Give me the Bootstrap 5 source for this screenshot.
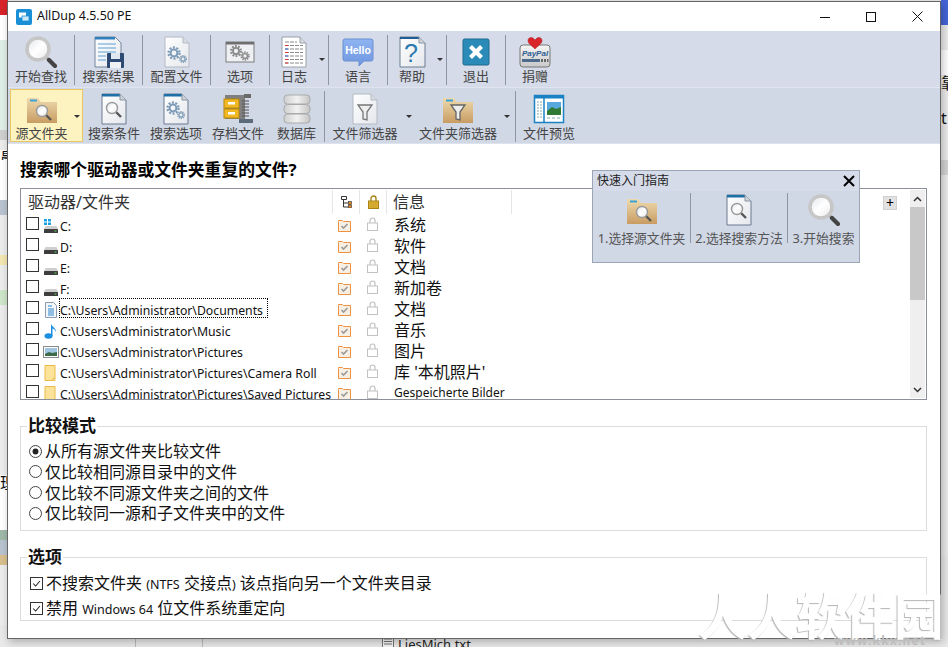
<!DOCTYPE html>
<html lang="zh-CN">
<head>
<meta charset="UTF-8">
<title>AllDup 4.5.50 PE</title>
<link href="https://cdn.jsdelivr.net/npm/bootstrap@5.3.0/dist/css/bootstrap.min.css" rel="stylesheet">
<style>
html,body{height:647px;overflow:hidden}
body{background:#e9e9e9;font-family:"Noto Sans","Noto Sans CJK SC",sans-serif;color:#111;position:relative;width:948px}
.defs{position:absolute;width:0;height:0}
.strip{position:absolute;top:0;height:647px;overflow:hidden;width:8px;left:0}
.strip.r{left:941px;width:7px}
.strip>div{width:100%;flex:none;overflow:hidden;font-size:16px;line-height:16px}
.h10{height:10px}.h15{height:15px}.h25{height:25px}.h40{height:40px}.h60{height:60px}.h90{height:90px}
.b-red{background:#d8232a}.b-white{background:#fff}.b-green{background:#dfeee6}.b-grey{background:#cfcfcf}.b-lt{background:#ececec}
.b-yel{background:#f4e6b0}.b-blue{background:#4565d8}.b-dk{background:#d4d4d4}.b-mix{background:#9fb8a8}.b-tan{background:#d8c08c}
.b-sl{background:#b9c3cf}.b-lg{background:#cde5c8}
.win{position:absolute;left:7px;top:1px;width:934px;height:638px;background:#fff;border:1px solid #666;box-shadow:2px 3px 8px rgba(0,0,0,.25)}
.tb-title{height:29px;font-size:12.4px}
.tb-title .app{margin-left:8px;margin-right:5px}
.wb{width:46px;height:29px}
.tb{background:#d5dbe8;height:57px;border-bottom:1px solid #dfe4ee}
.tb.two{background:#d0d7e5;height:56px;border-bottom:1px solid #dde2ec}
.it{flex:none;padding-top:5px;font-size:13px;line-height:16px;color:#444;text-align:center;position:relative;white-space:nowrap}
.it svg{display:block;margin:0 auto}
.it.cr{padding-right:10px}
.cr i{position:absolute;right:3px;top:27px;border:3px solid transparent;border-top:3px solid #333;border-bottom:0}
.sep{flex:none;width:1px;background:#8f96a3;margin:4px 0 2px}
.two .sep{margin:3px 0 1px}
.w66{width:66px}.w67{width:67px}.w58{width:58px}
.active{width:73px;margin:1px 0 1px 2px;padding-top:3px;background:#fdf3c0;border:1px solid #e9c766}
.w62{width:62px}.w55{width:55px}.w90{width:90px}.w100{width:100px}.w66b{width:66px}
.it.w100{padding-right:14px}
.it.w100 i{right:5px}
.active i{right:2px;top:25px}
.head{font-size:16.8px;font-weight:700;line-height:24px;margin:14px 0 0 12px;color:#000}
.panel{margin:6px 13px 0 12px;height:212px;border:1px solid #8a8f99;background:#fff}
.list{overflow:hidden;min-width:0}
.lh{height:25px;flex:none;font-size:16px;line-height:24px;color:#333}
.lh>div{flex:none;border-right:1px solid #e6e6e6;height:24px;margin-top:1px}
.c1{width:312px;padding-left:7px}
.c2{width:27px}.c3{width:27px}.c4{width:125px;padding-left:6px}
.plus{width:14px;height:14px;background:#e2e2e2;border:1px solid #d0d0d0;margin:7px 0 0 371px;font-size:14px;line-height:11px;text-align:center;color:#000}
.lr{height:21px;flex:none;align-items:center;white-space:nowrap}
.lr .form-check-input{margin:-3px 4px 0 5px}
.ic{flex:none;margin-top:2px}
.path{width:274px;font-size:12.25px;margin-right:5px;align-self:flex-start}
.path span{display:inline-block;height:20px;line-height:25px;padding:0 5px 0 1px}
.focus{outline:1px dotted #000;outline-offset:-1px}
.ock{margin:1px 16px 0 0}.lk{margin:-1px 16px 0 0}
.info{font-size:16px;line-height:20px}
.info.sm{font-size:12px}
.form-check-input{width:13px;height:13px;flex:none;border:1px solid #333;background-color:#fff;box-shadow:none}
.form-check-input[type=checkbox]{border-radius:0}
.form-check-input:checked{background-color:#fff;border-color:#333;background-image:url("data:image/svg+xml,%3csvg xmlns='http://www.w3.org/2000/svg' viewBox='0 0 13 13'%3e%3cpath fill='none' stroke='%23222' stroke-width='1.2' d='M2.5 6.5l3 3 5-6'/%3e%3c/svg%3e")}
.form-check-input[type=radio]{border-radius:50%;border-color:#444}
.form-check-input[type=radio]:checked{background-image:url("data:image/svg+xml,%3csvg xmlns='http://www.w3.org/2000/svg' viewBox='0 0 13 13'%3e%3ccircle cx='6.5' cy='6.5' r='3.5' fill='%23222'/%3e%3c/svg%3e")}
.scroll{width:15px;flex:none;background:#efefef;margin:1px 1px 1px auto}
.scroll .btn-a{height:17px}
.scroll .thumb{height:93px;background:#c8c8c8}
fieldset.gb{margin:0 13px 0 12px;border:1px solid #dcdcdc;border-radius:0;padding:0 8px 0 8px}
fieldset.gb legend{float:none;width:auto;font-size:17px;font-weight:700;line-height:20px;margin:0 0 0 -2px;padding:0 1px;color:#111}
.f1{margin-top:16px!important;height:115px}
.f2{margin-top:16px!important;height:74px}
.opt{font-size:16px;line-height:20px;height:20.67px;align-items:center;white-space:nowrap}
.opt .form-check-input{margin:0 3px 0 0}
.f1 .opts{padding-top:5px}
.f2 .opts{padding-top:4px}
.f2 .opt{height:25px}
.f2 .opt .form-check-input{margin:0 3px 0 1px}
.lat{font-size:12.5px}
.guide{position:absolute;left:584px;top:168px;width:268px;height:93px;background:#d0d7e5;border:1px solid #9aa5b5}
.gh{height:20px;background:#d5dbe8;font-size:12px;line-height:22px;padding:0 4px;color:#222}
.gc{flex:none;text-align:center;font-size:12.8px;line-height:16px;color:#555;white-space:nowrap}
.gc svg{display:block;margin:3px auto 4px}
.g1{width:97px}.g2{width:96px}.g3{width:71px}
.gsep{flex:none;width:1px;background:#8f96a3;margin:2px 0 3px}
.wm{position:absolute;left:698px;top:593px;font:700 50px/40px "Noto Sans CJK SC",sans-serif;color:#fff;text-shadow:-1px 1px 1px #b5b5b5;letter-spacing:-1px;white-space:nowrap;pointer-events:none}
.wm2{position:absolute;left:834px;top:636px;font:700 12px/10px "Noto Sans",sans-serif;letter-spacing:1.2px;color:#bdbdbd}
.under{position:absolute;top:639px;left:135px;height:8px;width:68px;border:solid #bbb;border-width:0 1px}
.under2{position:absolute;top:636px;left:382px;font-size:13px;line-height:16px;color:#222}
</style>
</head>
<body>
<svg class="defs" aria-hidden="true">
<defs>
<linearGradient id="gGlass" x1="0" y1="0" x2="1" y2="1"><stop offset="0" stop-color="#dfe3e8"/><stop offset=".5" stop-color="#fff"/><stop offset="1" stop-color="#e7e7e7"/></linearGradient>
<linearGradient id="gFolder" x1="0" y1="0" x2="0" y2="1"><stop offset="0" stop-color="#eedaae"/><stop offset="1" stop-color="#c89c62"/></linearGradient>
<linearGradient id="gDoc" x1="0" y1="0" x2="1" y2="1"><stop offset="0" stop-color="#fff"/><stop offset="1" stop-color="#e4e7ec"/></linearGradient>
<linearGradient id="gDb" x1="0" y1="0" x2="1" y2="0"><stop offset="0" stop-color="#cfcfcf"/><stop offset=".5" stop-color="#f2f2f2"/><stop offset="1" stop-color="#c4c4c4"/></linearGradient>
<linearGradient id="gPay" x1="0" y1="0" x2="0" y2="1"><stop offset="0" stop-color="#f6f6f6"/><stop offset="1" stop-color="#c9c9c9"/></linearGradient>
<linearGradient id="gHello" x1="0" y1="0" x2="0" y2="1"><stop offset="0" stop-color="#8fb4f2"/><stop offset="1" stop-color="#6f97e0"/></linearGradient>
<g id="gear"><circle r="5.5" fill="none" stroke="#7e9cb8" stroke-width="2.4" stroke-dasharray="2 1.45"/><circle r="3.4" fill="none" stroke="#7e9cb8" stroke-width="2"/></g>
<g id="gearD"><circle r="5.5" fill="none" stroke="#8a8a8a" stroke-width="2.4" stroke-dasharray="2 1.45"/><circle r="3.4" fill="none" stroke="#8a8a8a" stroke-width="2"/></g>
<g id="minimag"><line x1="4" y1="4" x2="9" y2="9" stroke="#555" stroke-width="2.4"/><circle r="5.5" fill="url(#gGlass)" stroke="#9a9a9a" stroke-width="1.4"/></g>
<g id="drv"><path d="M2.5 8h11L15 11H1z" fill="#cfcfcf"/><rect x="1" y="11" width="14" height="4" rx=".6" fill="#3d3d3d"/><rect x="11.5" y="12.5" width="2" height="1" fill="#5fd35f"/></g>
<symbol id="s-mag" viewBox="0 0 32 32"><line x1="20" y1="20" x2="24" y2="24" stroke="#aaa" stroke-width="3"/><line x1="24" y1="24" x2="30" y2="30" stroke="#444" stroke-width="4.2" stroke-linecap="round"/><circle cx="13" cy="13" r="11.5" fill="url(#gGlass)" stroke="#c6c6c6" stroke-width="2.6"/><circle cx="13" cy="13" r="9.8" fill="none" stroke="#a0a0a0" stroke-width=".6"/></symbol>
<symbol id="s-docsave" viewBox="0 0 32 32"><path d="M2 1h20l6 6v24H2z" fill="url(#gDoc)" stroke="#75869c"/><rect x="2" y="1" width="20" height="2.5" fill="#2f7fbd"/><path d="M5 8h18M5 12h18M5 16h18M5 20h8M5 24h8" stroke="#5aa0d4" stroke-width="1.2"/><rect x="14" y="17" width="17" height="15" rx="1" fill="#2d4a72"/><rect x="18" y="17" width="9" height="6" fill="#dfe6ef"/><rect x="17" y="26" width="11" height="6" fill="#eef1f5"/></symbol>
<symbol id="s-docgear" viewBox="0 0 32 32"><path d="M4 1h18l6 6v24H4z" fill="url(#gDoc)" stroke="#b4bac4"/><path d="M22 1v6h6" fill="#d8dce2" stroke="#b4bac4"/><use href="#gear" transform="translate(13 17)"/><use href="#gear" transform="translate(22 23) scale(.6)"/></symbol>
<symbol id="s-opts" viewBox="0 0 32 32"><rect x="2" y="6" width="28" height="20" fill="#eef0f3" stroke="#7d7d7d"/><rect x="2" y="6" width="28" height="2.5" fill="#6e6e6e"/><use href="#gearD" transform="translate(12 15) scale(.9)"/><use href="#gearD" transform="translate(21 20) scale(.7)"/></symbol>
<symbol id="s-log" viewBox="0 0 32 32"><path d="M4 1h18l6 6v24H4z" fill="#fff" stroke="#9aa0aa"/><path d="M22 1v6h6" fill="#d8dce2" stroke="#9aa0aa"/><path d="M7 6h12M7 9.500h18M7 13h18M7 16.500h18M7 20h18M7 23.500h18M7 27h18" stroke="#8a8a8a" stroke-dasharray="4 1"/><path d="M7 9.500h3M7 16.500h3M7 23.500h3M7 27h3" stroke="#d33"/><path d="M7 13h3M7 20h3" stroke="#36c"/></symbol>
<symbol id="s-hello" viewBox="0 0 32 32"><path d="M3 3h26a2 2 0 0 1 2 2v18a2 2 0 0 1-2 2H22l-5 5v-5H3a2 2 0 0 1-2-2V5a2 2 0 0 1 2-2z" fill="url(#gHello)" stroke="#6a8fd0"/><text x="16" y="18" text-anchor="middle" font-family="Liberation Sans,sans-serif" font-size="10.500" font-weight="700" fill="#fff">Hello</text></symbol>
<symbol id="s-help" viewBox="0 0 32 32"><path d="M4 1h19l6 6v24H4z" fill="url(#gDoc)" stroke="#6d7d92"/><rect x="4" y="1" width="19" height="2" fill="#1f5d94"/><path d="M23 1v6h6" fill="#cfd4db" stroke="#8a95a3"/><text x="15" y="26" text-anchor="middle" font-family="Liberation Sans,sans-serif" font-size="25" fill="#2c7ab0">?</text></symbol>
<symbol id="s-exit" viewBox="0 0 32 32"><rect x="3" y="3" width="26" height="26" rx="1.500" fill="#2a8ab8" stroke="#1c6a8e"/><path d="M10.500 10.500l11 11M21.500 10.500l-11 11" stroke="#fff" stroke-width="4.200"/></symbol>
<symbol id="s-pay" viewBox="0 0 32 32"><rect x="1" y="9" width="30" height="22" rx="3" fill="url(#gPay)" stroke="#777"/><text x="16" y="20" text-anchor="middle" font-family="Liberation Sans,sans-serif" font-size="8" font-weight="700" font-style="italic" fill="#2e5d92">PayPal</text><rect x="3" y="23" width="18" height="3" fill="#4e6a8c"/><path d="M22 23h2v3h-2zM25 23h2v3h-2zM28 23h1.500v3H28z" fill="#666"/><path d="M16 13C12 9 9 7.500 9 4.500 9 2 12 .5 14 2l2 2 2-2c2-1.500 5 0 5 2.500 0 3-3 4.500-7 8.500z" fill="#d9242b" stroke="#a51a1f" stroke-width=".5"/></symbol>
<symbol id="s-fsearch" viewBox="0 0 32 32"><path d="M1 5h11l3 4h16v21H1z" fill="url(#gFolder)"/><rect x="4" y="6.500" width="7" height="2" fill="#3aa3d6"/><g transform="translate(16 18)"><use href="#minimag"/></g></symbol>
<symbol id="s-dsearch" viewBox="0 0 32 32"><path d="M4 1h18l6 6v24H4z" fill="url(#gDoc)" stroke="#6a7b90"/><rect x="4" y="1" width="18" height="2.500" fill="#1d6fa8"/><path d="M22 1v6h6" fill="#cfd4db" stroke="#8a95a3"/><g transform="translate(14 15)"><use href="#minimag"/></g></symbol>
<symbol id="s-dgear" viewBox="0 0 32 32"><path d="M4 1h18l6 6v24H4z" fill="url(#gDoc)" stroke="#6a7b90"/><rect x="4" y="1" width="18" height="2.500" fill="#1d6fa8"/><path d="M22 1v6h6" fill="#cfd4db" stroke="#8a95a3"/><use href="#gear" transform="translate(13 15)"/><use href="#gear" transform="translate(21 22) scale(.6)"/></symbol>
<symbol id="s-cab" viewBox="0 0 32 32"><rect x="3" y="2" width="20" height="24" fill="#7f7f7f"/><rect x="2" y="6" width="15" height="9" fill="#f2b824" stroke="#b88708"/><rect x="2" y="16" width="15" height="9" fill="#f2b824" stroke="#b88708"/><rect x="6" y="9" width="7" height="2.500" fill="#fff"/><rect x="6" y="19" width="7" height="2.500" fill="#fff"/><path d="M20 8h7M20 11h7M20 14h7M20 17h7M20 20h7M20 23h7" stroke="#555" stroke-width="1.200"/><rect x="17" y="26" width="14" height="4" fill="#5c6a7a"/><path d="M22 1h7v4h-7z" fill="#6a6a6a"/></symbol>
<symbol id="s-db" viewBox="0 0 32 32"><rect x="3" y="2" width="26" height="9" rx="3.500" fill="url(#gDb)" stroke="#aaa"/><rect x="3" y="11.500" width="26" height="9" rx="3.500" fill="url(#gDb)" stroke="#aaa"/><rect x="3" y="21" width="26" height="9" rx="3.500" fill="url(#gDb)" stroke="#aaa"/></symbol>
<symbol id="s-dfilt" viewBox="0 0 32 32"><path d="M4 1h18l6 6v24H4z" fill="url(#gDoc)" stroke="#b4bac4"/><path d="M22 1v6h6" fill="#d8dce2" stroke="#b4bac4"/><path d="M9 12h14l-5 7v8l-4-1v-7z" fill="#eee" stroke="#777" stroke-width="1.300"/></symbol>
<symbol id="s-ffilt" viewBox="0 0 32 32"><path d="M1 5h11l3 4h16v21H1z" fill="url(#gFolder)"/><rect x="4" y="6.500" width="7" height="2" fill="#3aa3d6"/><path d="M9 12h14l-5 7v8l-4-1v-7z" fill="#eee" stroke="#666" stroke-width="1.300"/></symbol>
<symbol id="s-prev" viewBox="0 0 32 32"><rect x="1.500" y="2.500" width="29" height="27" fill="#fff" stroke="#1a82c4" stroke-width="1.500"/><rect x="1.500" y="2.500" width="29" height="3" fill="#1a82c4"/><path d="M11 5v24" stroke="#1a82c4" stroke-width="1.500"/><path d="M4 9h5M4 12h5M4 15h5M4 18h5M4 21h5M4 24h5" stroke="#8aa" stroke-dasharray="2 1"/><rect x="14" y="9" width="14" height="13" fill="#57a8dc"/><path d="M14 18l5-4 4 2 5-2v8H14z" fill="#2f7a35"/><path d="M14 25h14" stroke="#8aa" stroke-dasharray="3 2"/></symbol>
<symbol id="s-dwin" viewBox="0 0 16 16"><path d="M1 1h3v2.500H1zM5 1h3v2.500H5zM1 4.500h3V7H1zM5 4.500h3V7H5z" fill="#1ba1e2"/><use href="#drv"/></symbol>
<symbol id="s-drive" viewBox="0 0 16 16"><use href="#drv"/></symbol>
<symbol id="s-sdoc" viewBox="0 0 16 16"><path d="M2.500 .5h8l3 3v12h-11z" fill="#f4f6f8" stroke="#8a9bb0"/><path d="M5 4h4M5 7h6M5 9h6M5 11h6M5 13h6" stroke="#2a86d0"/></symbol>
<symbol id="s-music" viewBox="0 0 16 16"><ellipse cx="5.500" cy="13" rx="4" ry="2.800" fill="#1a8fe3"/><path d="M8 13V.5c.5 3.500 5.500 4 5 9-.5-2.500-2-3.500-3.500-4V13z" fill="#1a8fe3"/></symbol>
<symbol id="s-pic" viewBox="0 0 16 16"><rect x=".5" y="2.500" width="15" height="11" fill="#fff" stroke="#8a8a8a"/><rect x="2" y="4" width="12" height="8" fill="#9fc5e0"/><path d="M2 10l4-2 3 1 5-1v4H2z" fill="#3d6b4a"/></symbol>
<symbol id="s-yf" viewBox="0 0 16 16"><path d="M2 .5h10v13h-2v2H2z" fill="#fde39a" stroke="#e9bb45"/><path d="M12 13.500v2h-2" fill="none" stroke="#e9bb45"/></symbol>
<symbol id="s-of" viewBox="0 0 13 13"><path d="M.5 2.500v-1h4l1 1h7v10H.5z" fill="#f8efe4" stroke="#f0913f"/><path d="M3.500 7l2 2 4-4" fill="none" stroke="#9a9a9a" stroke-width="1.600"/></symbol>
<symbol id="s-lk" viewBox="0 0 11 14"><path d="M3 6V3.500a2.500 2.500 0 0 1 5 0V6" fill="none" stroke="#c2c2c2" stroke-width="1.200"/><rect x=".5" y="6" width="10" height="7.500" fill="#fff" stroke="#c2c2c2"/></symbol>
<symbol id="s-glk" viewBox="0 0 11 14"><path d="M3 6V3.500a2.500 2.500 0 0 1 5 0V6" fill="none" stroke="#a88414" stroke-width="1.400"/><rect x=".5" y="6" width="10" height="7.500" fill="#e0b83c" stroke="#a88414"/><path d="M1.500 8h8M1.500 10h8M1.500 12h8" stroke="#c89c20"/></symbol>
<symbol id="s-tree" viewBox="0 0 11 12"><path d="M.5 .5h5v3h-5zM2.500 3.500V11h5M2.500 7h5" fill="none" stroke="#333"/><rect x="7.500" y="5.500" width="3" height="3" fill="#e08a2e" stroke="#333" stroke-width=".6"/><rect x="7.500" y="9" width="3" height="3" fill="#e08a2e" stroke="#333" stroke-width=".6"/></symbol>
</defs>
</svg>

<div class="strip d-flex flex-column">
  <div class="b-red h15"></div><div class="b-white h25"></div><div class="b-green h90"></div><div class="b-grey h10"></div>
  <div class="b-lt h10"></div><div class="b-white h10">晨</div><div class="b-white h40"></div><div class="b-sl h15"></div><div class="b-lt h40"></div>
  <div class="b-yel h10"></div><div class="b-lt h25"></div><div class="b-lg h15"></div><div class="b-lt h60"></div>
  <div class="b-lt h60"></div><div class="b-lt h40"></div><div class="b-lt h10"></div><div class="b-white h15">理</div><div class="b-white h40"></div><div class="b-mix h10"></div>
  <div class="b-sl h15"></div><div class="b-tan h10"></div><div class="b-lt h60"></div>
</div>
<div class="strip r d-flex flex-column">
  <div class="b-blue h25"></div><div class="b-lt h25"></div><div class="b-white h25"></div><div class="b-lt h25">靠</div><div class="b-lt h10"></div><div class="b-lt h25">t</div><div class="b-lt h25"></div>
  <div class="b-dk h15"></div><div class="b-lt h25"></div><div class="b-lt h25"></div><div class="b-lt h60"></div><div class="b-lt h90"></div><div class="b-lt h90"></div><div class="b-lt h90"></div>
</div>
<div class="under"></div>
<div class="under2 d-flex align-items-start gap-1"><svg width="12" height="12"><path d="M.5 .5h11v11H.5zM2 3h8M2 5.500h8M2 8h8" fill="#f4f4f4" stroke="#777"/></svg>LiesMich.txt</div>

<div class="win d-flex flex-column">
  <div class="tb-title d-flex align-items-center">
    <svg class="app" width="16" height="16" viewBox="0 0 16 16"><rect width="16" height="16" rx="2" fill="#1b8fd6"/><rect x="3" y="3.500" width="7" height="5" fill="#fff"/><rect x="6" y="7" width="7" height="5" fill="#cdeafa" stroke="#1b8fd6" stroke-width=".8"/></svg>
    <span>AllDup 4.5.50 PE</span>
    <div class="ms-auto d-flex">
      <div class="wb d-flex align-items-center justify-content-center"><svg width="10" height="10"><path d="M0 5.500h10" stroke="#111"/></svg></div>
      <div class="wb d-flex align-items-center justify-content-center"><svg width="10" height="10"><rect x=".5" y=".5" width="9" height="9" fill="none" stroke="#111"/></svg></div>
      <div class="wb d-flex align-items-center justify-content-center"><svg width="11" height="11"><path d="M.5 .5l10 10M10.500 .5l-10 10" stroke="#111"/></svg></div>
    </div>
  </div>

  <div class="tb d-flex">
    <div class="it w66"><svg width="32" height="32"><use href="#s-mag"/></svg>开始查找</div><div class="sep"></div>
    <div class="it w67"><svg width="32" height="32"><use href="#s-docsave"/></svg>搜索结果</div><div class="sep"></div>
    <div class="it w67"><svg width="32" height="32"><use href="#s-docgear"/></svg>配置文件</div><div class="sep"></div>
    <div class="it w58"><svg width="32" height="32"><use href="#s-opts"/></svg>选项</div><div class="sep"></div>
    <div class="it w58 cr"><svg width="32" height="32"><use href="#s-log"/></svg>日志<i></i></div><div class="sep"></div>
    <div class="it w58"><svg width="32" height="32"><use href="#s-hello"/></svg>语言</div><div class="sep"></div>
    <div class="it w58 cr"><svg width="32" height="32"><use href="#s-help"/></svg>帮助<i></i></div><div class="sep"></div>
    <div class="it w58"><svg width="32" height="32"><use href="#s-exit"/></svg>退出</div><div class="sep"></div>
    <div class="it w58"><svg width="32" height="32"><use href="#s-pay"/></svg>捐赠</div>
  </div>

  <div class="tb two d-flex">
    <div class="it active cr"><svg width="32" height="32"><use href="#s-fsearch"/></svg>源文件夹<i></i></div>
    <div class="it w62"><svg width="32" height="32"><use href="#s-dsearch"/></svg>搜索条件</div>
    <div class="it w62"><svg width="32" height="32"><use href="#s-dgear"/></svg>搜索选项</div>
    <div class="it w62"><svg width="32" height="32"><use href="#s-cab"/></svg>存档文件</div>
    <div class="it w55"><svg width="32" height="32"><use href="#s-db"/></svg>数据库</div>
    <div class="sep"></div>
    <div class="it w90 cr"><svg width="32" height="32"><use href="#s-dfilt"/></svg>文件筛选器<i></i></div>
    <div class="it w100 cr"><svg width="32" height="32"><use href="#s-ffilt"/></svg>文件夹筛选器<i></i></div>
    <div class="sep"></div>
    <div class="it w66b"><svg width="32" height="32"><use href="#s-prev"/></svg>文件预览</div>
  </div>

  <div class="head">搜索哪个驱动器或文件夹重复的文件?</div>

  <div class="panel d-flex">
    <div class="list d-flex flex-column flex-grow-1">
      <div class="lh d-flex">
        <div class="c1">驱动器/文件夹</div>
        <div class="c2 d-flex align-items-center justify-content-center"><svg width="11" height="12"><use href="#s-tree"/></svg></div>
        <div class="c3 d-flex align-items-center justify-content-center"><svg width="11" height="14"><use href="#s-glk"/></svg></div>
        <div class="c4">信息</div>
        <span class="plus">+</span>
      </div>
      <div class="lr d-flex"><input class="form-check-input" type="checkbox"><svg class="ic" width="16" height="16"><use href="#s-dwin"/></svg><div class="path"><span>C:</span></div><svg class="ock" width="13" height="13"><use href="#s-of"/></svg><svg class="lk" width="11" height="14"><use href="#s-lk"/></svg><div class="info">系统</div></div>
      <div class="lr d-flex"><input class="form-check-input" type="checkbox"><svg class="ic" width="16" height="16"><use href="#s-drive"/></svg><div class="path"><span>D:</span></div><svg class="ock" width="13" height="13"><use href="#s-of"/></svg><svg class="lk" width="11" height="14"><use href="#s-lk"/></svg><div class="info">软件</div></div>
      <div class="lr d-flex"><input class="form-check-input" type="checkbox"><svg class="ic" width="16" height="16"><use href="#s-drive"/></svg><div class="path"><span>E:</span></div><svg class="ock" width="13" height="13"><use href="#s-of"/></svg><svg class="lk" width="11" height="14"><use href="#s-lk"/></svg><div class="info">文档</div></div>
      <div class="lr d-flex"><input class="form-check-input" type="checkbox"><svg class="ic" width="16" height="16"><use href="#s-drive"/></svg><div class="path"><span>F:</span></div><svg class="ock" width="13" height="13"><use href="#s-of"/></svg><svg class="lk" width="11" height="14"><use href="#s-lk"/></svg><div class="info">新加卷</div></div>
      <div class="lr d-flex"><input class="form-check-input" type="checkbox"><svg class="ic" width="16" height="16"><use href="#s-sdoc"/></svg><div class="path"><span class="focus">C:\Users\Administrator\Documents</span></div><svg class="ock" width="13" height="13"><use href="#s-of"/></svg><svg class="lk" width="11" height="14"><use href="#s-lk"/></svg><div class="info">文档</div></div>
      <div class="lr d-flex"><input class="form-check-input" type="checkbox"><svg class="ic" width="16" height="16"><use href="#s-music"/></svg><div class="path"><span>C:\Users\Administrator\Music</span></div><svg class="ock" width="13" height="13"><use href="#s-of"/></svg><svg class="lk" width="11" height="14"><use href="#s-lk"/></svg><div class="info">音乐</div></div>
      <div class="lr d-flex"><input class="form-check-input" type="checkbox"><svg class="ic" width="16" height="16"><use href="#s-pic"/></svg><div class="path"><span>C:\Users\Administrator\Pictures</span></div><svg class="ock" width="13" height="13"><use href="#s-of"/></svg><svg class="lk" width="11" height="14"><use href="#s-lk"/></svg><div class="info">图片</div></div>
      <div class="lr d-flex"><input class="form-check-input" type="checkbox"><svg class="ic" width="16" height="16"><use href="#s-yf"/></svg><div class="path"><span>C:\Users\Administrator\Pictures\Camera Roll</span></div><svg class="ock" width="13" height="13"><use href="#s-of"/></svg><svg class="lk" width="11" height="14"><use href="#s-lk"/></svg><div class="info">库 '本机照片'</div></div>
      <div class="lr d-flex"><input class="form-check-input" type="checkbox"><svg class="ic" width="16" height="16"><use href="#s-yf"/></svg><div class="path"><span>C:\Users\Administrator\Pictures\Saved Pictures</span></div><svg class="ock" width="13" height="13"><use href="#s-of"/></svg><svg class="lk" width="11" height="14"><use href="#s-lk"/></svg><div class="info sm">Gespeicherte Bilder</div></div>
    </div>
    <div class="scroll d-flex flex-column">
      <div class="btn-a d-flex align-items-center justify-content-center"><svg width="9" height="6"><path d="M1 5l3.500-3.500L8 5" fill="none" stroke="#333" stroke-width="1.500"/></svg></div>
      <div class="thumb"></div>
      <div class="btn-a mt-auto d-flex align-items-center justify-content-center"><svg width="9" height="6"><path d="M1 1l3.500 3.500L8 1" fill="none" stroke="#333" stroke-width="1.500"/></svg></div>
    </div>
  </div>

  <fieldset class="gb f1">
    <legend>比较模式</legend>
    <div class="opts">
      <div class="opt d-flex"><input class="form-check-input" type="radio" name="cmp" checked><span>从所有源文件夹比较文件</span></div>
      <div class="opt d-flex"><input class="form-check-input" type="radio" name="cmp"><span>仅比较相同源目录中的文件</span></div>
      <div class="opt d-flex"><input class="form-check-input" type="radio" name="cmp"><span>仅比较不同源文件夹之间的文件</span></div>
      <div class="opt d-flex"><input class="form-check-input" type="radio" name="cmp"><span>仅比较同一源和子文件夹中的文件</span></div>
    </div>
  </fieldset>

  <fieldset class="gb f2">
    <legend>选项</legend>
    <div class="opts">
      <div class="opt d-flex"><input class="form-check-input" type="checkbox" checked><span>不搜索文件夹 <span class="lat">(NTFS</span> 交接点<span class="lat">)</span> 该点指向另一个文件夹目录</span></div>
      <div class="opt d-flex"><input class="form-check-input" type="checkbox" checked><span>禁用 <span class="lat">Windows 64</span> 位文件系统重定向</span></div>
    </div>
  </fieldset>

  <div class="guide">
    <div class="gh d-flex justify-content-between align-items-center"><span>快速入门指南</span><svg width="12" height="12"><path d="M1 1l10 10M11 1L1 11" stroke="#000" stroke-width="2"/></svg></div>
    <div class="d-flex">
      <div class="gc g1"><svg width="32" height="32"><use href="#s-fsearch"/></svg>1.选择源文件夹</div><div class="gsep"></div>
      <div class="gc g2"><svg width="32" height="32"><use href="#s-dsearch"/></svg>2.选择搜索方法</div><div class="gsep"></div>
      <div class="gc g3"><svg width="32" height="32"><use href="#s-mag"/></svg>3.开始搜索</div>
    </div>
  </div>
</div>
<div class="wm">人人软件园</div>
<div class="wm2">www.kkx.net</div>
<script src="https://cdn.jsdelivr.net/npm/bootstrap@5.3.0/dist/js/bootstrap.bundle.min.js"></script>
</body>
</html>
